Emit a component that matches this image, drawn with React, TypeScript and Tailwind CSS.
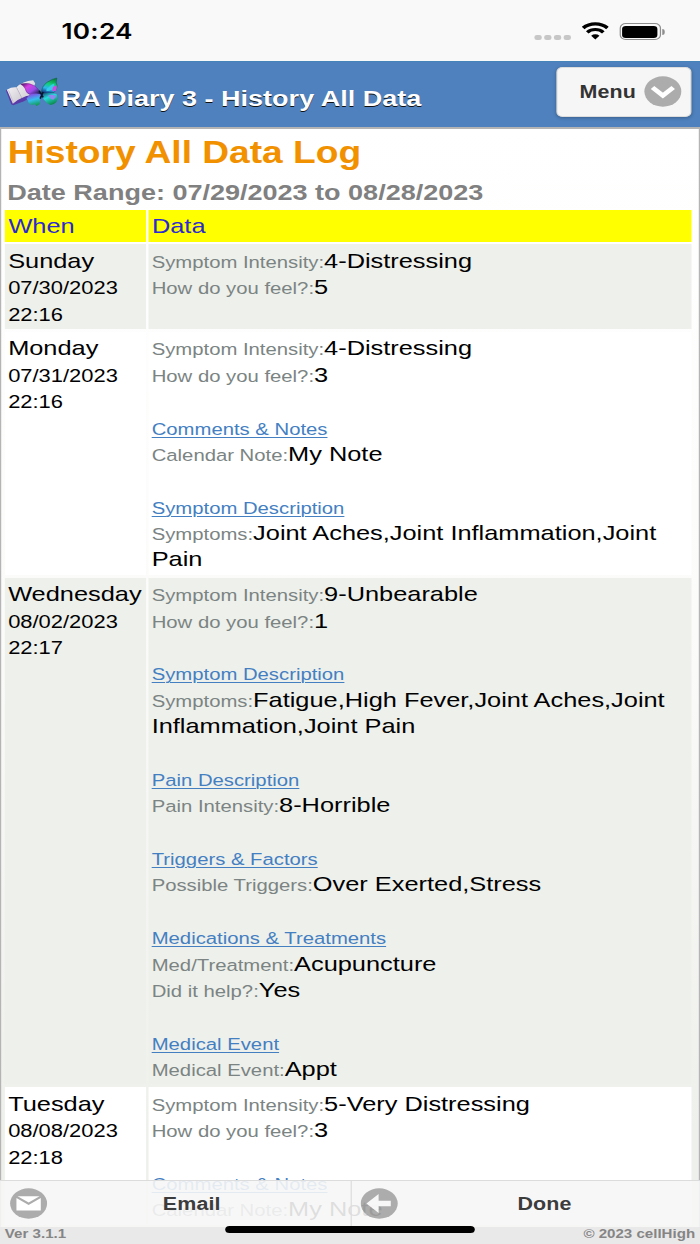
import type { ReactNode } from 'react';

type Line =
  | { kind: 'field'; label: string; value: string }
  | { kind: 'section'; title: string };

type Entry = {
  day: string;
  date: string;
  time: string;
  lines: Line[];
};

const field = (label: string, value: string): Line => ({ kind: 'field', label, value });
const section = (title: string): Line => ({ kind: 'section', title });

const entries: Entry[] = [
  {
    day: 'Sunday',
    date: '07/30/2023',
    time: '22:16',
    lines: [field('Symptom Intensity', '4-Distressing'), field('How do you feel?', '5')],
  },
  {
    day: 'Monday',
    date: '07/31/2023',
    time: '22:16',
    lines: [
      field('Symptom Intensity', '4-Distressing'),
      field('How do you feel?', '3'),
      section('Comments & Notes'),
      field('Calendar Note', 'My Note'),
      section('Symptom Description'),
      field('Symptoms', 'Joint Aches,Joint Inflammation,Joint Pain'),
    ],
  },
  {
    day: 'Wednesday',
    date: '08/02/2023',
    time: '22:17',
    lines: [
      field('Symptom Intensity', '9-Unbearable'),
      field('How do you feel?', '1'),
      section('Symptom Description'),
      field('Symptoms', 'Fatigue,High Fever,Joint Aches,Joint Inflammation,Joint Pain'),
      section('Pain Description'),
      field('Pain Intensity', '8-Horrible'),
      section('Triggers & Factors'),
      field('Possible Triggers', 'Over Exerted,Stress'),
      section('Medications & Treatments'),
      field('Med/Treatment', 'Acupuncture'),
      field('Did it help?', 'Yes'),
      section('Medical Event'),
      field('Medical Event', 'Appt'),
    ],
  },
  {
    day: 'Tuesday',
    date: '08/08/2023',
    time: '22:18',
    lines: [
      field('Symptom Intensity', '5-Very Distressing'),
      field('How do you feel?', '3'),
      section('Comments & Notes'),
      field('Calendar Note', 'My Note'),
    ],
  },
];

const StatusBar = () => (
  <div className="flex h-[61px] shrink-0 items-start bg-[#f9f9f9] pl-[50.5px] pr-[29.2px]">
    <span className="mt-[18px] font-['Inter'] text-[21.5px] font-semibold leading-[26px] tracking-[0.2px] text-black">
      10:24
    </span>
    <div className="ml-auto mt-[22px] flex items-start">
      <div className="mt-[13px] flex gap-[2.6px]">
        {[0, 1, 2, 3].map(i => (
          <span key={i} className="h-[5px] w-[5.4px] rounded-[2px] bg-[#c7c7c7]" />
        ))}
      </div>
      <svg className="ml-[9px] h-[18px] w-[22px]" viewBox="0 0 22 18" fill="none" stroke="#000">
        <path d="M1 6a14.2 14.2 0 0 1 20 0" strokeWidth="3.2" />
        <path d="M4.4 10.4a9.2 9.2 0 0 1 13.2 0" strokeWidth="3" />
        <path d="M7.6 13.7a4.8 4.8 0 0 1 6.8 0L11 17.4z" fill="#000" stroke="none" />
      </svg>
      <div className="ml-[9px] mt-px flex items-center">
        <div className="h-[17px] w-[34px] rounded-[5px] border border-[#8e8e8e] p-[1.5px]">
          <div className="h-full rounded-[3px] bg-black" />
        </div>
        <span className="ml-[1px] h-[6px] w-[2px] rounded-r-full bg-[#8e8e8e]" />
      </div>
    </div>
  </div>
);

const DiaryLogo = () => (
  <svg className="h-[30px] w-[44px]" viewBox="3 15 161 90" preserveAspectRatio="none">
    <defs>
      <linearGradient id="page" x1="0" y1="0" x2="1" y2="1">
        <stop offset="0" stopColor="#f4f2f5" />
        <stop offset="1" stopColor="#cbc7ce" />
      </linearGradient>
      <linearGradient id="wingLeft" x1="0" y1="0" x2="1" y2="0.8">
        <stop offset="0" stopColor="#35104f" />
        <stop offset="0.35" stopColor="#d83fe4" />
        <stop offset="0.65" stopColor="#9b4be8" />
        <stop offset="1" stopColor="#101e48" />
      </linearGradient>
      <linearGradient id="wingLeftLow" x1="0.3" y1="0" x2="0.6" y2="1">
        <stop offset="0" stopColor="#8f3fe0" />
        <stop offset="0.5" stopColor="#36bdf0" />
        <stop offset="1" stopColor="#0c9a48" />
      </linearGradient>
      <linearGradient id="wingRight" x1="0.7" y1="0" x2="0.4" y2="1">
        <stop offset="0" stopColor="#078038" />
        <stop offset="0.4" stopColor="#12cf78" />
        <stop offset="0.7" stopColor="#2bb8ee" />
        <stop offset="1" stopColor="#12367c" />
      </linearGradient>
      <linearGradient id="wingRightLow" x1="0" y1="0" x2="0.6" y2="1">
        <stop offset="0" stopColor="#16386e" />
        <stop offset="0.45" stopColor="#27dcdc" />
        <stop offset="1" stopColor="#0c8a4c" />
      </linearGradient>
    </defs>
    <path d="M6 55 22 97 28 100 60 88 90 72 84 40z" fill="#5a3ba8" />
    <path d="M9 53Q24 44 38 46L54 78Q38 84 27 95z" fill="url(#page)" />
    <path d="M38 46Q56 28 88 25L94 34 84 70Q66 70 54 78z" fill="url(#page)" />
    <path d="M14 55 29 92M38 47 54 78" stroke="#bdb7c2" strokeWidth="2" />
    <path
      d="M50 36Q74 30 92 41Q105 50 112 66Q98 71 80 68Q66 64 64 50Q60 42 50 36z"
      fill="url(#wingLeft)"
      stroke="#4a1a70"
      strokeWidth="1"
    />
    <path
      d="M112 66Q92 62 76 68L68 80Q74 84 74 92L84 100 92 96 98 102 108 96Q108 80 112 66z"
      fill="url(#wingLeftLow)"
    />
    <path
      d="M112 64Q114 42 130 31Q146 20 159 18Q155 32 160 42Q160 54 150 62Q132 66 112 64z"
      fill="url(#wingRight)"
      stroke="#0b5c3c"
      strokeWidth="1.5"
    />
    <path d="M128 52Q140 38 152 34Q152 44 146 52Q138 58 128 58z" fill="#36cbea" />
    <path d="M147 45 158 40Q161 48 156 57L146 58z" fill="#d24be0" />
    <path
      d="M112 66Q136 60 158 66Q164 78 158 90Q150 99 140 99L130 94Q118 84 112 66z"
      fill="url(#wingRightLow)"
    />
    <path d="M134 69Q148 66 156 72Q156 80 148 83 138 82 134 69z" fill="#9386ee" />
    <path d="M106 56 118 76M118 60 109 80" stroke="#081530" strokeWidth="5" />
  </svg>
);

const RoundIcon = ({ children }: { children: ReactNode }) => (
  <svg className="h-[31px] w-[31px] shrink-0" viewBox="0 0 31 31">
    <circle cx="15.5" cy="15.5" r="15.2" fill="#000" fillOpacity="0.3" />
    {children}
  </svg>
);

const Header = () => (
  <header className="flex h-[66px] shrink-0 items-start border-t border-[#4484b8] bg-[#4e81bd] pl-[4px] pr-[7px] text-white">
    <div className="mt-[15px]">
      <DiaryLogo />
    </div>
    <h1 className="ml-[2.5px] mt-[23px] text-[22.2px] font-bold leading-[28px] [text-shadow:0_1.4px_0_#111]">
      RA Diary 3 - History All Data
    </h1>
    <button className="ml-auto mt-[5px] flex h-[50px] w-[111px] items-center rounded-[5px] border border-[#ddd] bg-[#f6f6f6] pl-[18px] text-[17.6px] font-bold text-[#333] shadow-[0_1px_3px_rgba(0,0,0,0.25)]">
      <span className="w-[53px] text-left tracking-[0.1px]">Menu</span>
      <div className="-mt-px">
        <RoundIcon>
          <path d="M7 11.5 15.5 19.5 24 11.5" fill="none" stroke="#fff" strokeWidth="4.2" />
        </RoundIcon>
      </div>
    </button>
  </header>
);

const DataLine = ({ line }: { line: Line }) => {
  if (line.kind === 'section') {
    return (
      <div className="pt-[26.39px]">
        <span className="text-[16.66px] leading-none text-[#447fc2] underline decoration-[1.4px] underline-offset-[2px]">
          {line.title}
        </span>
      </div>
    );
  }
  return (
    <div>
      <span className="text-[16.66px] leading-none text-[#7b8483]">{line.label}:</span>
      {line.value}
    </div>
  );
};

const LogTable = () => (
  <div className="ml-[2.5px] mr-[6px] grid grid-cols-[116px_1fr] gap-x-[2.3px] gap-y-[2.78px] text-[20.84px] leading-[26.39px] text-black">
    <div className="bg-[#ffff00] py-[2.6px] pl-[3.4px] text-[#2a2ad0]">When</div>
    <div className="bg-[#ffff00] py-[2.6px] pl-[3px] text-[#2a2ad0]">Data</div>
    {entries.map((entry, i) => {
      const bg = i % 2 === 0 ? 'bg-[#eef0eb]' : 'bg-white';
      return (
        <div key={entry.day} className="contents">
          <div className={`${bg} pb-[0.78px] pl-[3.2px] pt-[3.68px]`}>
            <div>{entry.day}</div>
            <div className="pt-px text-[18px]">{entry.date}</div>
            <div className="text-[18px]">{entry.time}</div>
          </div>
          <div className={`${bg} pb-[1.88px] pl-[2.8px] pr-[3px] pt-[3.68px]`}>
            {entry.lines.map((line, n) => (
              <DataLine key={n} line={line} />
            ))}
          </div>
        </div>
      );
    })}
  </div>
);

const Footer = () => (
  <footer className="absolute inset-x-0 bottom-0 h-[64.5px] border-t border-[#dcdcdc] font-bold">
    <div className="grid h-[46.5px] grid-cols-2 bg-[#f6f6f6]/90 text-[17.6px] text-[#3c3c3c]">
      <button className="flex items-center pl-[7.5px] pr-[8px]">
        <RoundIcon>
          <path d="M5.5 10 15.5 17 25.5 10V22.5H5.5z" fill="#fff" />
          <path d="M6.5 8.2H24.5L15.5 14.6z" fill="#fff" />
        </RoundIcon>
        <span className="grow pr-[3px] pt-[1.5px] text-center tracking-[0.1px]">Email</span>
      </button>
      <button className="flex items-center border-l border-[#ddd] pl-[7px] pr-[7px]">
        <RoundIcon>
          <path d="M5 15.5 15 6V12.7H25V18.3H15V25z" fill="#fff" fillOpacity="0.9" />
        </RoundIcon>
        <span className="grow pt-[1.5px] text-center tracking-[0.1px]">Done</span>
      </button>
    </div>
    <div className="flex h-[18px] justify-between bg-[#e9e9e9] px-[4px] text-[12.4px] leading-[14px] text-[#858585]">
      <span>Ver 3.1.1</span>
      <span>© 2023 cellHigh</span>
    </div>
    <div className="absolute bottom-[11.5px] left-[185px] h-[7px] w-[205px] rounded-full bg-black" />
  </footer>
);

export default function App() {
  return (
    <div className="h-[1244px] w-[700px] overflow-hidden bg-white">
      {/* wide glyphs: the page is laid out at 575px and stretched to the window */}
      <div className="relative flex h-[1244px] w-[575px] origin-top-left scale-x-[1.2174] flex-col overflow-hidden font-['Liberation_Sans',Arial,sans-serif]">
        <StatusBar />
        <Header />
        <main className="h-[1117px] shrink-0 overflow-hidden border-x-[1.6px] border-t-2 border-[#b4b4b4] bg-linear-to-b from-white via-[#fbfbfa] via-45% to-[#eef0eb] to-90%">
          <h2 className="ml-[5.3px] mt-[4px] text-[30.5px] font-bold leading-[38px] text-[#f29100]">History All Data Log</h2>
          <h3 className="ml-[5px] mt-[7px] mb-[3px] text-[22.2px] font-bold leading-[29px] text-[#808080]">
            Date Range: 07/29/2023 to 08/28/2023
          </h3>
          <LogTable />
        </main>
        <Footer />
      </div>
    </div>
  );
}
